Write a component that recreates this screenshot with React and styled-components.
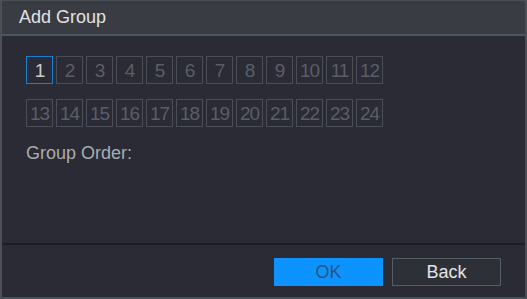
import styled, { createGlobalStyle } from 'styled-components';

const GlobalStyle = createGlobalStyle`
  html, body {
    margin: 0;
    padding: 0;
    background: #2a2b34;
  }
  * {
    box-sizing: border-box;
  }
`;

const channels = Array.from({ length: 24 }, (_, i) => i + 1);

const App = () => {
  const selected = 1;
  return (
    <>
      <GlobalStyle />
      <Dialog>
        <Header>Add Group</Header>
        <Body>
          <Grid>
            {channels.map((n) => (
              <Channel key={n} $active={n === selected}>
                {n}
              </Channel>
            ))}
          </Grid>
          <Label>Group Order:</Label>
        </Body>
        <Footer>
          <Button $primary>OK</Button>
          <Button>Back</Button>
        </Footer>
      </Dialog>
    </>
  );
};

export default App;

const Dialog = styled.div`
  width: 527px;
  height: 299px;
  display: flex;
  flex-direction: column;
  background: #2a2b34;
  border: 1px solid #4a5058;
  border-width: 1px 2px 2px 2px;
  font-family: 'Liberation Sans', Arial, sans-serif;
`;

const Header = styled.div`
  height: 35px;
  flex-shrink: 0;
  display: flex;
  align-items: center;
  padding-left: 17px;
  background: #3a3c43;
  border-bottom: 2px solid #4c545c;
  color: #e2e2e2;
  font-size: 18px;
`;

const Body = styled.div`
  flex: 1;
  padding: 20px 0 0 24px;
`;

const Grid = styled.div`
  display: grid;
  grid-template-columns: repeat(12, 27px);
  grid-auto-rows: 28px;
  column-gap: 3px;
  row-gap: 15px;
`;

const Channel = styled.div`
  display: flex;
  align-items: center;
  justify-content: center;
  padding-top: 1px;
  border: 1px solid ${(p) => (p.$active ? '#1b7fd0' : '#4b4e56')};
  color: ${(p) => (p.$active ? '#c9cbce' : '#5b5e67')};
  font-size: 19px;
  letter-spacing: -1px;
`;

const Label = styled.div`
  margin-top: 16px;
  color: #a9acb1;
  font-size: 18px;
`;

const Footer = styled.div`
  height: 54px;
  flex-shrink: 0;
  display: flex;
  align-items: flex-start;
  justify-content: flex-end;
  gap: 9px;
  padding: 13px 24px 0 0;
  border-top: 2px solid #1d1e25;
`;

const Button = styled.button`
  width: 109px;
  height: 28px;
  padding: 0;
  font-family: inherit;
  font-size: 18px;
  border: 1px solid ${(p) => (p.$primary ? '#0d93ff' : '#575d65')};
  background: ${(p) => (p.$primary ? '#0d93ff' : '#2e3038')};
  color: ${(p) => (p.$primary ? '#2c5578' : '#e4e4e4')};
`;
